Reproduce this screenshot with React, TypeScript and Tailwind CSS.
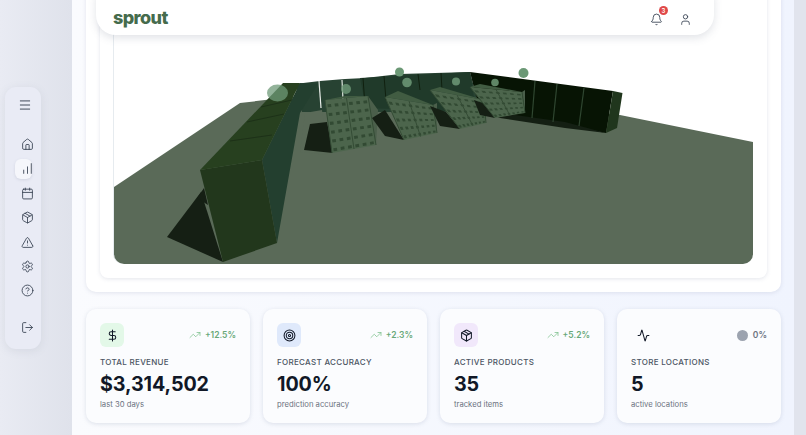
import { Menu, House, ChartNoAxesColumnIncreasing, Calendar, Package, TriangleAlert, Settings, CircleHelp, LogOut, Bell, User, DollarSign, Target, Activity, TrendingUp } from "lucide-react";

type P = [number, number];
const pts = (a: P[]) => a.map((p) => p.join(",")).join(" ");
const lerp = (a: P, b: P, t: number): P => [a[0] + (b[0] - a[0]) * t, a[1] + (b[1] - a[1]) * t];
const bil = (tl: P, tr: P, br: P, bl: P, u: number, v: number): P => lerp(lerp(tl, tr, u), lerp(bl, br, u), v);

function Rack({ tl, tr, br, bl, shadow, end, cols, rows, top }: { tl: P; tr: P; br: P; bl: P; shadow: P[]; end: P[]; cols: number; rows: number; top: P[] }) {
  const cells = [];
  for (let c = 0; c < cols; c++) {
    for (let r = 0; r < rows; r++) {
      const u0 = (c + 0.25) / cols, u1 = (c + 0.75) / cols, v0 = (r + 0.5) / rows, v1 = (r + 0.85) / rows;
      cells.push(<polygon key={`${c}-${r}`} points={pts([bil(tl, tr, br, bl, u0, v0), bil(tl, tr, br, bl, u1, v0), bil(tl, tr, br, bl, u1, v1), bil(tl, tr, br, bl, u0, v1)])} fill="#324a33" />);
    }
  }
  return (
    <g>
      <polygon points={pts(shadow)} fill="#151f14" />
      <polygon points={pts(end)} fill="#4b5f4b" />
      <polygon points={pts(top)} fill="#415c42" />
      <polygon points={pts([tl, tr, br, bl])} fill="#4c654c" />
      {cells}
      <line x1={lerp(tl, tr, 0.5)[0]} y1={lerp(tl, tr, 0.5)[1]} x2={lerp(bl, br, 0.5)[0]} y2={lerp(bl, br, 0.5)[1]} stroke="#344c35" strokeWidth="1" />
      <line x1={br[0]} y1={br[1]} x2={tr[0]} y2={tr[1]} stroke="#344c35" strokeWidth="1" />
      <line x1={bl[0]} y1={bl[1]} x2={tl[0]} y2={tl[1]} stroke="#344c35" strokeWidth="1" />
    </g>
  );
}

function Scene() {
  return (
    <svg viewBox="114 -20 639 284" className="block h-full w-full">
      <polygon points="114,187 240,103 300,96 620,115 753,142 753,264 114,264" fill="#5a6a58" />
      {/* left wall shadow */}
      <polygon points="167,237 201,192 223,262" fill="#151f14" />
      <polygon points="197,198 204,188 208,205" fill="#151f14" />
      {/* back wall */}
      <polygon points="295,84 320,81 345,79 365,78 400,74 470,72 480,110 440,112 380,112 320,112 302,112" fill="#274232" />
      <polygon points="360,78 470,72 476,112 366,108" fill="#203a2a" />
      <line x1="319" y1="81" x2="321" y2="108" stroke="#e8ece8" strokeWidth="1.2" />
      <line x1="342" y1="80" x2="343" y2="100" stroke="#dfe6df" strokeWidth="1.2" />
      <line x1="363" y1="78" x2="365" y2="106" stroke="#10200f" strokeWidth="1" />
      <line x1="384" y1="76" x2="386" y2="100" stroke="#10200f" strokeWidth="1" />
      <line x1="418" y1="74" x2="420" y2="90" stroke="#10200f" strokeWidth="1" />
      <line x1="441" y1="73" x2="442" y2="90" stroke="#10200f" strokeWidth="1" />
      {/* right wall */}
      <polygon points="470,72 613,91 606,133 565,125 480,112" fill="#071404" />
      <polygon points="613,91 622.5,93 617,128 606,133" fill="#20361d" />
      <polygon points="480,110 565,122 606,133 565,128 500,118" fill="#141f13" />
      <line x1="535" y1="81" x2="532" y2="118" stroke="#2f4630" strokeWidth="1.2" />
      <line x1="557" y1="84" x2="553" y2="122" stroke="#2f4630" strokeWidth="1.2" />
      <line x1="584" y1="88" x2="579" y2="126" stroke="#2f4630" strokeWidth="1.2" />
      {/* left wall */}
      <polygon points="262,160 300,83 318,84 300,113 277,243" fill="#233f2f" />
      <polygon points="200,170 262,160 277,243 223,262" fill="#22371c" />
      <polygon points="200,170 262,160 300,83 283,83" fill="#27401f" />
      <polyline points="230,141 272,135" fill="none" stroke="#1b2d17" strokeWidth="0.8" />
      <polyline points="247,122 284,114" fill="none" stroke="#1b2d17" strokeWidth="0.8" />
      <polyline points="261,107 292,100" fill="none" stroke="#1b2d17" strokeWidth="0.8" />
      {/* racks */}
      <polygon points="305,113 322,110 328,155 300,152" fill="#5a6a58" />
      <Rack tl={[325, 100]} tr={[368, 96]} br={[376, 145]} bl={[332, 153]} cols={6} rows={6} top={[[325, 100], [345, 96], [368, 96]]} end={[[368, 96], [378, 110], [376, 145]]} shadow={[[304, 150], [310, 124], [327, 122], [333, 153]]} />
      <Rack tl={[385, 97]} tr={[433, 105]} br={[437, 133]} bl={[404, 140]} cols={7} rows={5} top={[[385, 97], [398, 91], [433, 105]]} end={[[433, 105], [437, 103], [437, 133]]} shadow={[[372, 118], [385, 110], [404, 140], [385, 136]]} />
      <Rack tl={[430, 90]} tr={[484, 100]} br={[486, 123]} bl={[460, 129]} cols={7} rows={5} top={[[430, 90], [440, 87], [484, 100]]} end={[[484, 100], [486, 98], [486, 123]]} shadow={[[430, 106], [446, 112], [460, 129], [440, 126]]} />
      <Rack tl={[470, 87]} tr={[522, 92]} br={[525, 113]} bl={[495, 118]} cols={7} rows={5} top={[[470, 87], [480, 84], [522, 92]]} end={[[522, 92], [525, 90], [525, 113]]} shadow={[[474, 100], [485, 104], [495, 118], [480, 115]]} />
      {/* spheres */}
      <ellipse cx="277.500" cy="93" rx="10.500" ry="8.500" fill="#6f9a78" fillOpacity="0.75" />
      <circle cx="346" cy="89" r="5" fill="#6f9a78" fillOpacity="0.8" />
      <circle cx="399.500" cy="72" r="4.500" fill="#6b9875" />
      <circle cx="407" cy="82.500" r="4.800" fill="#6f9a78" fillOpacity="0.85" />
      <circle cx="456" cy="81.500" r="4" fill="#6f9a78" fillOpacity="0.85" />
      <circle cx="495" cy="82.500" r="3.800" fill="#6f9a78" fillOpacity="0.85" />
      <circle cx="523.500" cy="73" r="5" fill="#6b9875" />
    </svg>
  );
}

const stats = [
  { Icon: DollarSign, tile: "bg-[#e3f8e8]", trend: "+12.5%", label: "TOTAL REVENUE", value: "$3,314,502", sub: "last 30 days" },
  { Icon: Target, tile: "bg-[#dfe9fb]", trend: "+2.3%", label: "FORECAST ACCURACY", value: "100%", sub: "prediction accuracy" },
  { Icon: Package, tile: "bg-[#f1e8fb]", trend: "+5.2%", label: "ACTIVE PRODUCTS", value: "35", sub: "tracked items" },
  { Icon: Activity, tile: "", trend: "0%", label: "STORE LOCATIONS", value: "5", sub: "active locations" },
];

const navIcons = [House, ChartNoAxesColumnIncreasing, Calendar, Package, TriangleAlert, Settings, CircleHelp];

export default function App() {
  return (
    <div className="relative flex h-[435px] w-[806px] overflow-hidden bg-[#e1e4ed] font-['Inter',sans-serif]">
      <aside className="flex w-[72px] shrink-0 items-center bg-gradient-to-r from-[#e9ebf3] to-[#dfe2eb] pl-[5px]">
        <nav className="flex h-[262px] w-[36px] flex-col items-center rounded-[11px] bg-[#e9ebf5] pt-[11px] text-[#374151] shadow-[0_2px_8px_rgba(120,125,150,0.14)]">
          <Menu size={14} strokeWidth={1.6} className="ml-[4px] h-[14px] shrink-0" />
          <div className="mt-[26px] ml-[8px] flex flex-col items-center gap-[10.400px]">
            {navIcons.map((I, i) => (
              <div key={i} className={`flex h-[14px] w-[18px] items-center justify-center ${i === 1 ? "relative" : ""}`}>
                {i === 1 && <span className="absolute -top-[3px] -left-[3px] h-[20px] w-[17px] rounded-[6px] bg-[#f5f6fb] shadow-[0_1px_3px_rgba(120,125,150,0.2)]" />}
                <I size={13} strokeWidth={1.6} className="relative shrink-0" />
              </div>
            ))}
          </div>
          <LogOut size={13} strokeWidth={1.6} className="mt-[23px] ml-[8px] shrink-0" />
        </nav>
      </aside>

      <main className="flex h-full w-[722px] shrink-0 flex-col justify-end gap-[17px] bg-gradient-to-r from-[#fafbfe] to-[#f0f4fe] pr-[13px] pb-[12px] pl-[14px]">
        <section className="h-[340px] shrink-0 rounded-[10px] bg-white p-[14px] shadow-[0_1px_4px_rgba(120,130,160,0.18)]">
          <div className="h-full rounded-[8px] bg-white p-[14px] shadow-[0_1px_4px_rgba(120,130,160,0.2)]">
            <div className="h-full overflow-hidden rounded-[10px] bg-white shadow-[-1px_0_0_#e6ebef]">
              <Scene />
            </div>
          </div>
        </section>
        <section className="grid shrink-0 grid-cols-4 gap-[13px]">
          {stats.map((s) => (
            <article key={s.label} className="h-[114px] rounded-[10px] bg-[#fbfcfe] px-[14px] pt-[14px] shadow-[0_1px_4px_rgba(120,130,160,0.22)]">
              <div className="flex h-[24px] items-center justify-between">
                <div className={`flex h-[24px] w-[24px] items-center justify-center rounded-[6px] ${s.tile}`}>
                  <s.Icon size={13} strokeWidth={1.9} className="text-[#111827]" />
                </div>
                {s.trend === "0%" ? (
                  <div className="flex items-center gap-[5px] text-[8.500px] font-semibold text-[#6b7280]">
                    <span className="h-[11px] w-[11px] rounded-full bg-[#9ca3af]" />0%
                  </div>
                ) : (
                  <div className="flex items-center gap-[4px] text-[8.500px] font-semibold text-[#68a878]">
                    <TrendingUp size={12} strokeWidth={1.5} className="text-[#7cc08c]" />
                    {s.trend}
                  </div>
                )}
              </div>
              <p className="mt-[10px] text-[8px] leading-[11px] font-medium tracking-[0.3px] text-[#4b5563]">{s.label}</p>
              <p className="mt-[4px] text-[19.700px] leading-[25px] font-bold tracking-[-0.1px] text-[#111827]">{s.value}</p>
              <p className="mt-[2px] text-[7.700px] leading-[11px] text-[#6b7280]">{s.sub}</p>
            </article>
          ))}
        </section>
      </main>

      <header className="absolute top-[-20px] left-[96px] flex h-[55px] w-[618px] items-end justify-between rounded-[20px] bg-white pr-[22px] pb-[8px] pl-[17px] shadow-[0_3px_8px_rgba(90,100,120,0.18)]">
        <span className="relative top-[1px] text-[18px] leading-[20px] font-extrabold tracking-[-0.6px] text-[#456b4c]">sprout</span>
        <div className="flex items-center gap-[16px] text-[#374151]">
          <div className="relative top-[-1px]">
            <Bell size={13} strokeWidth={1.6} />
            <span className="absolute -top-[7px] left-[9px] flex h-[9px] w-[9px] items-center justify-center rounded-full bg-[#e04848] text-[6px] font-semibold text-white">3</span>
          </div>
          <User size={13} strokeWidth={1.6} className="relative top-[-1px]" />
        </div>
      </header>
    </div>
  );
}
